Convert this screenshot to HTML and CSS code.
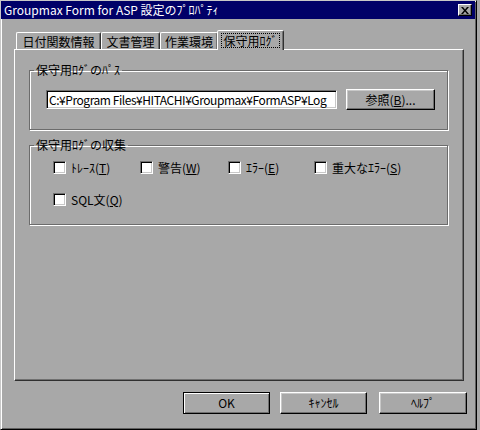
FILE: index.html
```html
<!DOCTYPE html>
<html lang="ja">
<head>
<meta charset="utf-8">
<title>Groupmax Form for ASP 設定のﾌﾟﾛﾊﾟﾃｨ</title>
<link rel="stylesheet" href="styles.css">
</head>
<body>
<div class="window">
  <div class="titlebar">
    <span class="title">Groupmax Form for ASP 設定のﾌﾟﾛﾊﾟﾃｨ</span>
    <span class="close"><svg width="8" height="7" viewBox="0 0 8 7"><path d="M0 0h2l2 2.5L6 0h2L5 3.5 8 7H6L4 4.5 2 7H0l3-3.5z" fill="#000"/></svg></span>
  </div>
  <div class="content">
    <div class="tabs">
      <div class="tab t1">日付関数情報</div>
      <div class="tab t2">文書管理</div>
      <div class="tab t3">作業環境</div>
      <div class="tab sel"><span class="focus">保守用ﾛｸﾞ</span></div>
    </div>
    <div class="panel">
      <fieldset class="group g1">
        <legend>保守用ﾛｸﾞのﾊﾟｽ</legend>
        <div class="pathrow">
          <div class="field">C:¥Program Files¥HITACHI¥Groupmax¥FormASP¥Log</div>
          <div class="btn browse"><span>参照(<u>B</u>)...</span></div>
        </div>
      </fieldset>
      <fieldset class="group g2">
        <legend>保守用ﾛｸﾞの収集</legend>
        <div class="checks">
          <label class="chk"><span class="box"></span><span>ﾄﾚｰｽ(<u>T</u>)</span></label>
          <label class="chk"><span class="box"></span><span>警告(<u>W</u>)</span></label>
          <label class="chk"><span class="box"></span><span>ｴﾗｰ(<u>E</u>)</span></label>
          <label class="chk"><span class="box"></span><span>重大なｴﾗｰ(<u>S</u>)</span></label>
          <label class="chk"><span class="box"></span><span>SQL文(<u>Q</u>)</span></label>
        </div>
      </fieldset>
    </div>
    <div class="buttons">
      <div class="btn default">OK</div>
      <div class="btn">ｷｬﾝｾﾙ</div>
      <div class="btn help">ﾍﾙﾌﾟ</div>
    </div>
  </div>
</div>
</body>
</html>
```
FILE: styles.css
```css
html, body {
  margin: 0;
  padding: 0;
  background: #a8a8a8;
}
body {
  font-family: "Noto Sans CJK JP", "Noto Sans", sans-serif;
  font-size: 12px;
  color: #000;
}
.window {
  width: 477px;
  height: 430px;
  box-sizing: border-box;
  border-style: solid;
  border-width: 1px;
  border-color: #c8c8c8 #000 #000 #c8c8c8;
  box-shadow: inset 1px 1px 0 #fff, inset -1px -1px 0 #606060;
  background: #a8a8a8;
  display: flex;
  flex-direction: column;
}
.titlebar {
  height: 18px;
  margin: 0 1px 0 0;
  background: #000068;
  color: #fff;
  display: flex;
  align-items: center;
  justify-content: space-between;
  padding: 0 3px 0 3px;
}
.title {
  line-height: 18px;
  white-space: nowrap;
}
.close {
  width: 14px;
  height: 12px;
  box-sizing: border-box;
  background: #a8a8a8;
  border: 1px solid;
  border-color: #fff #000 #000 #fff;
  box-shadow: inset -1px -1px 0 #707070;
  display: flex;
  align-items: center;
  justify-content: center;
}
.content {
  padding: 12px 0 0 13px;
  display: flex;
  flex-direction: column;
}
.tabs {
  display: flex;
  align-items: flex-end;
  height: 18px;
  padding-left: 2px;
  position: relative;
  z-index: 1;
}
.tab {
  height: 17px;
  box-sizing: border-box;
  border-style: solid;
  border-width: 1px 1px 0 1px;
  border-color: #fff #303030 transparent #fff;
  border-radius: 2px 2px 0 0;
  box-shadow: inset -1px 0 0 #707070;
  display: flex;
  align-items: center;
  justify-content: center;
  line-height: 14px;
  padding-top: 1px;
}
.t1 { width: 85px; }
.t2 { width: 59px; }
.t3 { width: 58px; }
.sel {
  width: 67px;
  height: 20px;
  margin: 0 0 -1px -1px;
  background: #a8a8a8;
  padding-bottom: 2px;
}
.focus {
  outline: 1px dotted #000;
  outline-offset: 0;
  padding: 0 1px;
  line-height: 13px;
}
.panel {
  width: 450px;
  height: 332px;
  box-sizing: border-box;
  border-style: solid;
  border-width: 1px;
  border-color: #fff #303030 #303030 #fff;
  box-shadow: inset -1px -1px 0 #707070;
  padding: 13px 0 0 14px;
  display: flex;
  flex-direction: column;
  gap: 8px;
}
.group {
  margin: 0;
  width: 419px;
  box-sizing: border-box;
  border: 1px solid #6c6c6c;
  box-shadow: 1px 1px 0 #fff, inset 1px 1px 0 #fff;
  padding: 0;
}
.group legend {
  padding: 0 2px;
  margin-left: 4px;
  line-height: 14px;
}
.g1 { height: 67px; }
.g2 { height: 87px; }
.pathrow {
  display: flex;
  align-items: center;
  padding: 12px 0 0 16px;
  gap: 9px;
}
.field {
  width: 291px;
  height: 19px;
  box-sizing: border-box;
  background: #fff;
  border: 1px solid;
  border-color: #707070 #fff #fff #707070;
  box-shadow: inset 1px 1px 0 #000, inset -1px -1px 0 #c8c8c8;
  padding: 0 0 0 2px;
  line-height: 17px;
  white-space: nowrap;
  overflow: hidden;
  letter-spacing: -0.45px;
}
.btn {
  width: 87px;
  height: 22px;
  box-sizing: border-box;
  border: 1px solid;
  border-color: #fff #000 #000 #fff;
  box-shadow: inset -1px -1px 0 #707070, inset 1px 1px 0 #c8c8c8;
  display: flex;
  align-items: center;
  justify-content: center;
  line-height: 14px;
}
.browse {
  width: 89px;
  height: 21px;
}
.btn.default {
  outline: 1px solid #000;
  outline-offset: -1px;
  border-color: #000;
  box-shadow: inset 1px 1px 0 #fff, inset -1px -1px 0 #707070;
}
.btn.help {
  width: 88px;
  margin-left: 2px;
}
.checks {
  display: grid;
  grid-template-columns: 87px 88px 86px 1fr;
  row-gap: 18px;
  padding: 8px 0 0 23px;
}
.chk {
  display: flex;
  align-items: center;
  gap: 5px;
  height: 14px;
  white-space: nowrap;
}
.box {
  width: 13px;
  height: 13px;
  box-sizing: border-box;
  background: #fff;
  border: 1px solid;
  border-color: #707070 #fff #fff #707070;
  box-shadow: inset 1px 1px 0 #000, inset -1px -1px 0 #c8c8c8;
  flex: none;
}
.buttons {
  display: flex;
  justify-content: flex-end;
  gap: 10px;
  margin: 11px 0 0 0;
  padding-right: 11px;
  width: 464px;
  box-sizing: border-box;
}
```
